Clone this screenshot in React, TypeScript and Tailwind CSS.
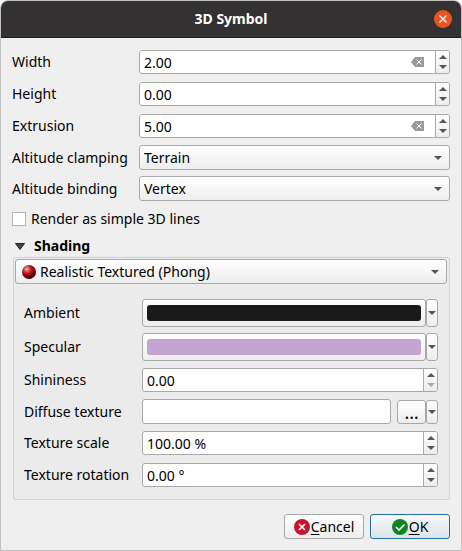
import { useId, useState } from "react";
import type { ReactNode } from "react";

function Triangle({ up = false, className = "" }: { up?: boolean; className?: string }) {
  return (
    <svg viewBox="0 0 8 4" className={`h-1 w-2 ${className}`} aria-hidden="true">
      <path d={up ? "M4 0 8 4H0Z" : "M0 0H8L4 4Z"} fill="currentColor" />
    </svg>
  );
}

function Row({
  label,
  htmlFor,
  nested = false,
  className = "",
  children,
}: {
  label: string;
  htmlFor: string;
  nested?: boolean;
  className?: string;
  children: ReactNode;
}) {
  return (
    <div className={`flex items-center ${className}`}>
      <label htmlFor={htmlFor} className={`shrink-0 whitespace-nowrap ${nested ? "w-[118px]" : "w-[127px]"}`}>
        {label}
      </label>
      <div className="flex min-w-0 flex-1 items-center">{children}</div>
    </div>
  );
}

function SpinBox({
  label,
  value,
  clearable = false,
  atMinimum = false,
  nested = false,
  className = "",
}: {
  label: string;
  value: string;
  clearable?: boolean;
  atMinimum?: boolean;
  nested?: boolean;
  className?: string;
}) {
  const id = useId();
  const [text, setText] = useState(value);
  return (
    <Row label={label} htmlFor={id} nested={nested} className={className}>
      <div className="flex h-6 flex-1 overflow-hidden rounded-[3px] border border-[#a9a9a9] bg-white">
        <input
          id={id}
          type="text"
          value={text}
          onChange={(e) => setText(e.target.value)}
          className="min-w-0 flex-1 bg-transparent pt-px pl-1 outline-none"
        />
        {clearable && (
          <button type="button" aria-label={`Clear ${label}`} className="mr-[11px]">
            <svg viewBox="0 0 13 10" className="h-[10px] w-[13px]">
              <path d="M0 5 4 0H13V10H4Z" fill="#999" />
              <path d="m5.500 2.500 5 5m0-5-5 5" stroke="#fff" />
            </svg>
          </button>
        )}
        <div className="flex w-[14px] flex-col border-l border-[#a9a9a9] bg-linear-to-b from-white to-[#ededed] text-[#555]">
          <button type="button" aria-label={`Increase ${label}`} className="flex flex-1 items-end justify-center pb-[3px]">
            <Triangle up />
          </button>
          <button
            type="button"
            aria-label={`Decrease ${label}`}
            className={`flex flex-1 items-start justify-center pt-[3px] ${atMinimum ? "text-[#aaa]" : ""}`}
          >
            <Triangle />
          </button>
        </div>
      </div>
    </Row>
  );
}

function Combo({ id, options, icon, label }: { id?: string; options: string[]; icon?: ReactNode; label?: string }) {
  return (
    <div className="relative flex flex-1 items-center">
      <select
        id={id}
        aria-label={label}
        className={`h-[25px] w-full appearance-none rounded-[3px] border border-[#a9a9a9] bg-linear-to-b from-white to-[#ededed] pr-6 outline-none ${icon ? "pl-6" : "pl-1"}`}
      >
        {options.map((o) => (
          <option key={o}>{o}</option>
        ))}
      </select>
      {icon}
      <Triangle className="pointer-events-none absolute right-2 text-[#555]" />
    </div>
  );
}

function MenuButton({ label, className }: { label: string; className: string }) {
  return (
    <button
      type="button"
      aria-label={label}
      className={`flex w-3 items-center justify-center rounded-[3px] border border-[#a9a9a9] bg-linear-to-b from-white to-[#ededed] text-[#555] ${className}`}
    >
      <Triangle className="shrink-0" />
    </button>
  );
}

function ColorRow({ label, swatch, className }: { label: string; swatch: string; className: string }) {
  const id = useId();
  return (
    <Row label={label} htmlFor={id} nested className={className}>
      <button
        id={id}
        type="button"
        className="h-7 flex-1 rounded-[3px] border border-[#a9a9a9] bg-linear-to-b from-white to-[#ededed] px-1 py-[5px]"
      >
        <span className={`block h-4 rounded-[3px] ${swatch}`} />
      </button>
      <MenuButton label={`${label} options`} className="h-7" />
    </Row>
  );
}

function Sphere() {
  return (
    <svg viewBox="0 0 14 14" className="pointer-events-none absolute left-[7px] size-[14px]" aria-hidden="true">
      <defs>
        <radialGradient id="sphere" cx="0.35" cy="0.3" r="0.75">
          <stop offset="0" stopColor="#f4caca" />
          <stop offset="0.2" stopColor="#dc6060" />
          <stop offset="0.45" stopColor="#b51217" />
          <stop offset="0.8" stopColor="#650004" />
          <stop offset="1" stopColor="#250000" />
        </radialGradient>
      </defs>
      <circle cx="7" cy="7" r="7" fill="url(#sphere)" />
    </svg>
  );
}

export default function App() {
  return (
    <div className="overflow-hidden rounded-t-lg border border-[#c0c0c0] bg-[#efefef] font-['Noto_Sans',sans-serif] text-sm text-black">
      <header className="flex h-[37px] items-center border-b border-[#1c1c1c] bg-[#333132] px-[9px]">
        <h1 className="flex-1 pl-[18px] text-center font-bold text-white">3D Symbol</h1>
        <button type="button" aria-label="Close" className="flex size-[18px] items-center justify-center rounded-full bg-[#e95420]">
          <svg viewBox="0 0 8 8" className="size-2">
            <path d="m0.5 0.5 7 7m0-7-7 7" stroke="#fff" strokeWidth="1.2" />
          </svg>
        </button>
      </header>

      <form className="px-[11px] pt-3 pb-[11px]" onSubmit={(e) => e.preventDefault()}>
        <SpinBox label="Width" value="2.00" clearable />
        <SpinBox label="Height" value="0.00" className="mt-2" />
        <SpinBox label="Extrusion" value="5.00" clearable className="mt-2" />
        <Row label="Altitude clamping" htmlFor="clamping" className="mt-[7px]">
          <Combo id="clamping" options={["Terrain", "Relative", "Absolute"]} />
        </Row>
        <Row label="Altitude binding" htmlFor="binding" className="mt-[6px]">
          <Combo id="binding" options={["Vertex", "Centroid"]} />
        </Row>
        <label className="mt-2 flex items-center gap-[5px]">
          <input type="checkbox" className="size-[14px] appearance-none border border-[#b4b4b4] bg-white checked:bg-[#308cc6]" />
          Render as simple 3D lines
        </label>

        <section>
          <button type="button" aria-expanded="true" className="mt-[7px] flex h-5 items-center gap-[9px] pl-[3px] font-bold">
            <svg viewBox="0 0 10 7" className="h-[7px] w-[10px]" aria-hidden="true">
              <path d="M0.5 0.5h9L5 6.5Z" fill="#444" stroke="#222" />
            </svg>
            Shading
          </button>
          <div className="mt-px ml-px rounded-[2px] border border-[#d2d2d2] bg-[#ebebeb] pb-3">
            <div className="flex pt-px pr-[2px] pl-px">
              <Combo label="Shading technique" icon={<Sphere />} options={["Realistic Textured (Phong)", "Realistic (Phong)", "CAD (Gooch)"]} />
            </div>
            <div className="pr-[11px] pl-[10px]">
              <ColorRow label="Ambient" swatch="bg-[#1a1a1a]" className="mt-[15px]" />
              <ColorRow label="Specular" swatch="bg-[#c4a4d0]" className="mt-[6px]" />
              <SpinBox label="Shininess" value="0.00" atMinimum nested className="mt-[7px]" />
              <Row label="Diffuse texture" htmlFor="diffuse" nested className="mt-[7px]">
                <input
                  id="diffuse"
                  type="text"
                  className="mr-[6px] h-[25px] min-w-0 flex-1 rounded-[3px] border border-[#a9a9a9] bg-white px-1 outline-none"
                />
                <button
                  type="button"
                  aria-label="Browse"
                  className="flex h-6 w-[29px] items-center justify-center rounded-[3px] border border-[#a9a9a9] bg-linear-to-b from-white to-[#ededed] text-lg leading-5"
                >
                  …
                </button>
                <MenuButton label="Texture options" className="h-6" />
              </Row>
              <SpinBox label="Texture scale" value="100.00 %" nested className="mt-[7px]" />
              <SpinBox label="Texture rotation" value="0.00 °" nested className="mt-2" />
            </div>
          </div>
        </section>

        <footer className="mt-[14px] flex justify-end gap-[6px]">
          <button
            type="button"
            className="flex h-[25px] w-20 items-center justify-center gap-px rounded-[3px] border border-[#a9a9a9] bg-linear-to-b from-white to-[#ededed]"
          >
            <svg viewBox="0 0 16 16" className="size-4" aria-hidden="true">
              <circle cx="8" cy="8" r="8" fill="#c7162b" />
              <path d="m5 5 6 6m0-6-6 6" stroke="#fff" strokeWidth="1.6" />
            </svg>
            <span><span className="underline decoration-1 underline-offset-2">C</span>ancel</span>
          </button>
          <button
            type="submit"
            className="flex h-[25px] w-20 items-center justify-center gap-px rounded-[3px] border border-[#246c9f] bg-linear-to-b from-[#f7f9fb] to-[#dbe4eb]"
          >
            <svg viewBox="0 0 16 16" className="size-4" aria-hidden="true">
              <circle cx="8" cy="8" r="8" fill="#0e8420" />
              <path d="m4 8 3 3 5.500-5.500" fill="none" stroke="#fff" strokeWidth="1.6" />
            </svg>
            <span><span className="underline decoration-1 underline-offset-2">O</span>K</span>
          </button>
        </footer>
      </form>
    </div>
  );
}
